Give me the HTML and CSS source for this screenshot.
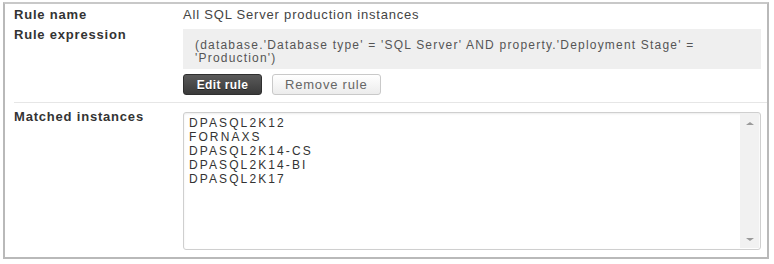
FILE: index.html
```html
<!DOCTYPE html>
<html lang="en">
<head>
  <meta charset="UTF-8">
  <title>Rule details</title>
  <link rel="stylesheet" href="styles.css">
</head>
<body>
  <div class="panel">
    <div class="row">
      <div class="label">Rule name</div>
      <div class="value">All SQL Server production instances</div>
    </div>
    <div class="row rule-row">
      <div class="label">Rule expression</div>
      <div class="value">
        <div class="expr">(database.'Database type' = 'SQL Server' AND property.'Deployment Stage' =<br>'Production')</div>
        <div class="actions">
          <button type="button" class="btn btn-dark">Edit rule</button>
          <button type="button" class="btn">Remove rule</button>
        </div>
      </div>
    </div>
    <div class="row matched-row">
      <div class="label">Matched instances</div>
      <div class="value">
        <div class="instances">
          <div class="instance-list">
            <div>DPASQL2K12</div>
            <div>FORNAXS</div>
            <div>DPASQL2K14-CS</div>
            <div>DPASQL2K14-BI</div>
            <div>DPASQL2K17</div>
          </div>
          <div class="scrollbar">
            <span class="arrow up"></span>
            <span class="arrow down"></span>
          </div>
        </div>
      </div>
    </div>
  </div>
</body>
</html>
```

FILE: styles.css
```css
body {
  margin: 0;
  background: #fff;
  font-family: "Liberation Sans", Arial, sans-serif;
  font-size: 13px;
  letter-spacing: 0.8px;
  color: #444;
}
.panel {
  width: 753px;
  height: 250px;
  margin: 2px 0 0 3px;
  padding: 3px 0 0 9px;
  border: 2px solid #b9b9b9;
  border-top-color: #c8c8c8;
}
.row {
  display: grid;
  grid-template-columns: 169px 1fr;
  line-height: 16px;
  padding-right: 2px;
}
.label {
  font-weight: bold;
  color: #333;
}
.value {
  padding-right: 4px;
}
.rule-row {
  margin-top: 4px;
  padding-bottom: 7px;
  border-bottom: 1px solid #e6e6e6;
}
.expr {
  margin-top: 2px;
  height: 40px;
  box-sizing: border-box;
  padding: 10px 0 0 12px;
  background: #efefef;
  font-size: 12px;
  letter-spacing: 1.2px;
  line-height: 13px;
  color: #555;
}
.actions {
  display: flex;
  gap: 10px;
  margin-top: 5px;
}
.btn {
  height: 21px;
  padding: 0 12px;
  border: 1px solid #c9c9c9;
  border-radius: 3px;
  background: linear-gradient(#ffffff, #ececec);
  font-family: inherit;
  font-size: 13px;
  letter-spacing: 0.8px;
  color: #666;
  white-space: nowrap;
  cursor: pointer;
}
.btn-dark {
  width: 79px;
  padding: 0;
  border-color: #2f2f2f;
  background: linear-gradient(#5a5a5a, #3a3a3a);
  color: #fff;
  font-size: 12px;
  font-weight: bold;
  letter-spacing: 0.4px;
  text-shadow: 0 1px 0 #222;
}
.matched-row .label {
  padding-top: 6px;
}
.matched-row .value {
  padding-top: 9px;
}
.instances {
  display: flex;
  height: 138px;
  box-sizing: border-box;
  border: 1px solid #cfcfcf;
  border-radius: 3px;
  box-shadow: inset 0 1px 2px rgba(0,0,0,0.08);
}
.instance-list {
  flex: 1;
  padding: 3px 0 0 5px;
  font-size: 12px;
  line-height: 14px;
  color: #333;
  letter-spacing: 2.1px;
}
.scrollbar {
  width: 19px;
  margin: 1px 1px 1px 0;
  background: #f1f1f1;
  display: flex;
  flex-direction: column;
  justify-content: space-between;
  align-items: center;
  padding: 8px 0 7px;
}
.arrow {
  width: 0;
  height: 0;
  border-left: 4px solid transparent;
  border-right: 4px solid transparent;
}
.arrow.up {
  border-bottom: 3px solid #9a9a9a;
}
.arrow.down {
  border-top: 3px solid #9a9a9a;
}
```
